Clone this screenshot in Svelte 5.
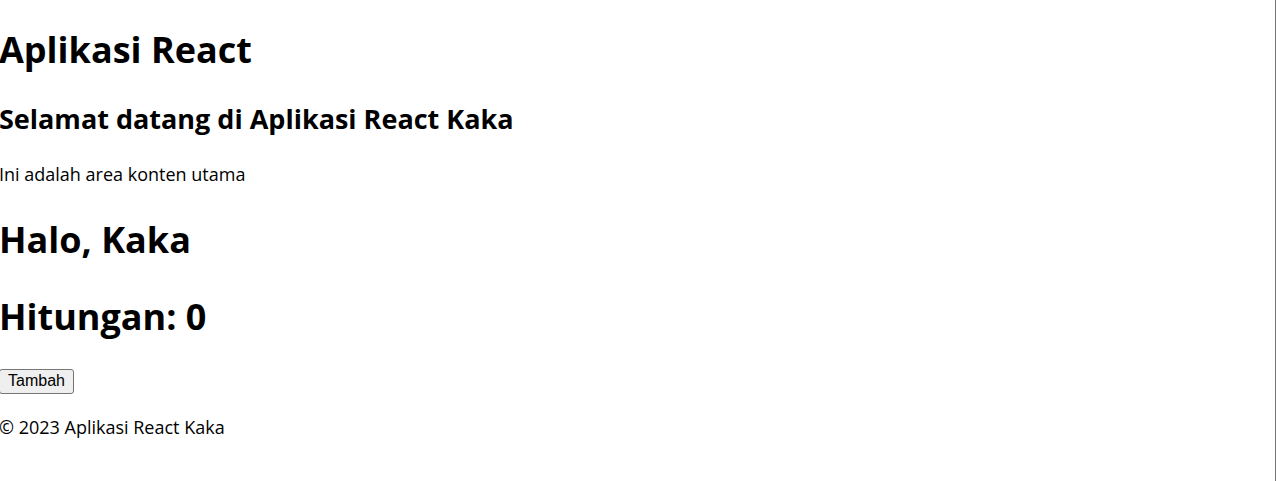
<script>
  let count = $state(0);
</script>

<div class="app">
  <header>
    <h1>Aplikasi React</h1>
  </header>
  <main>
    <h2>Selamat datang di Aplikasi React Kaka</h2>
    <p>Ini adalah area konten utama</p>
    <h1>Halo, Kaka</h1>
    <h1>Hitungan: {count}</h1>
    <button type="button" onclick={() => count++}>Tambah</button>
  </main>
  <footer>
    <p>© 2023 Aplikasi React Kaka</p>
  </footer>
</div>

<style>
  .app {
    display: flow-root;
    min-height: 100vh;
    box-sizing: border-box;
    border-right: 1px solid #747474;
    background: #fff;
    color: #000;
    font-family: "Segoe UI", "Open Sans", "Noto Sans", sans-serif;
    font-size: 18px;
    line-height: 24px;
  }

  header,
  main,
  footer {
    margin-left: -1px;
  }

  h1 {
    margin: 23px 0;
    font-size: 36px;
    line-height: 54px;
  }

  h2 {
    margin: 23px 0 24px;
    font-size: 27px;
    line-height: 38px;
  }

  p {
    margin: 21px 0 27px;
  }

  button {
    height: 25px;
    padding: 0 8px;
    border: 1px solid #767676;
    border-radius: 3px;
    background: #efefef;
    color: #000;
    font-family: "Liberation Sans", Arial, sans-serif;
    font-size: 16px;
    line-height: 20px;
  }
</style>
